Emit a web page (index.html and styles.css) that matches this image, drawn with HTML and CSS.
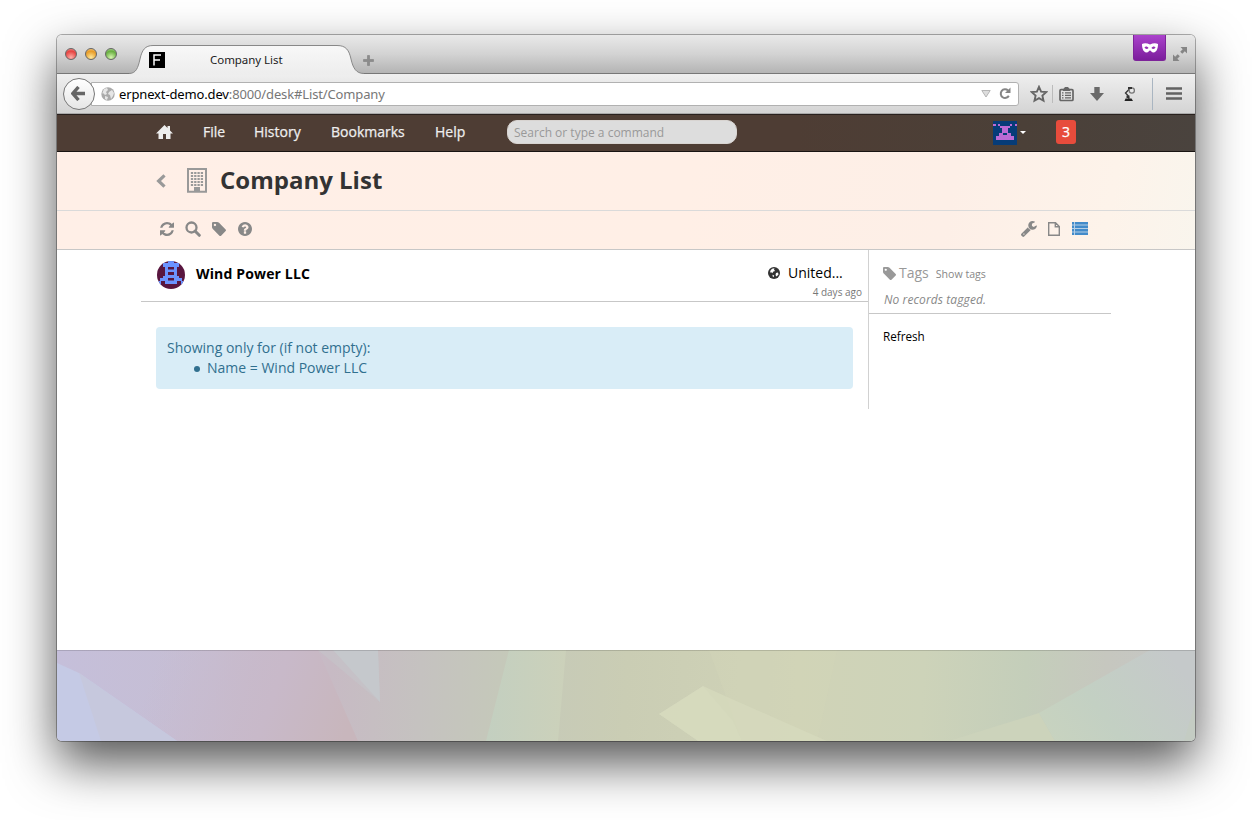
FILE: index.html
```html
<!DOCTYPE html>
<html lang="en">
<head>
<meta charset="utf-8">
<title>Company List</title>
<link rel="stylesheet" href="styles.css">
</head>
<body>
<div class="window">
  <div class="tabstrip">
    <div class="lights"><i class="red"></i><i class="amber"></i><i class="green"></i></div>
    <div class="tab">
      <svg class="tab-shape" width="240" height="30" viewBox="0 0 240 30"><defs><linearGradient id="tg" x2="0" y2="1"><stop stop-color="#f8f8f8"/><stop offset="1" stop-color="#ededed"/></linearGradient></defs><path d="M0 28.500C7 28.500 9 23 11 14C13 5 16 .5 24 .5H208C217 .5 220 5 222 14C224 23 227 28.500 235 28.500V30H0Z" fill="url(#tg)"/><path d="M0 28.500C7 28.500 9 23 11 14C13 5 16 .5 24 .5H208C217 .5 220 5 222 14C224 23 227 28.500 235 28.500" fill="none" stroke="#888"/></svg>
      <svg class="favicon" width="16" height="16"><path fill="#000" d="M0 0h16v16H0z"/><path d="M5 13.500V3h7M5 8h6" fill="none" stroke="#fff" stroke-width="1.500"/></svg>
      <span class="tab-title">Company List</span>
    </div>
    <svg class="plus" width="11" height="11"><path d="M4.500 .5h2v4h4v2h-4v4h-2v-4h-4v-2h4z" fill="#8c8c8c" stroke="#808080" stroke-width=".6"/></svg>
    <div class="mask"><svg width="16" height="10" viewBox="0 0 16 10"><path fill="#fff" fill-rule="evenodd" d="M0 1C2 0 5 0 8 1.500C11 0 14 0 16 1C16 5 15 9 11.500 9.500C9.500 9.500 9 7.500 8 7.500S6.500 9.500 4.500 9.500C1 9 0 5 0 1ZM2.500 4.500C3.500 6.300 5.500 6.300 6.500 5C5.500 3.300 3.500 3 2.500 4.500ZM13.500 4.500C12.500 3 10.500 3.300 9.500 5C10.500 6.300 12.500 6.300 13.500 4.500Z"/></svg></div>
    <svg class="expand" width="14" height="14" viewBox="0 0 14 14"><path fill="#858585" d="M7.500 0H14V6.500L11.800 4.300L9.300 6.800L7.200 4.700L9.700 2.200ZM0 7.500L2.200 9.700L4.700 7.200L6.800 9.300L4.300 11.800L6.500 14H0Z"/></svg>
  </div>
  <div class="addressbar">
    <div class="back"><svg width="15" height="15" viewBox="0 0 15 15"><path d="M7.500 1L1.800 7.500L7.500 14M3 7.500H14" fill="none" stroke="#666" stroke-width="3.400"/></svg></div>
    <div class="url">
      <svg width="14" height="14" viewBox="0 0 14 14"><circle cx="7" cy="7" r="6.700" fill="#aaa"/><path d="M3 2L6 1L7 3L5 5L6 7L4 8L2 6L1 7ZM8 5L11 3L13 6L12 9L10 12L9 8L7 7ZM4 9L7 10L6 13L4 12Z" fill="#e6e6e6"/></svg>
      <span class="address"><b>erpnext-demo.dev</b>:8000/desk#List/Company</span>
      <svg class="drop" width="10" height="8"><path d="M.8.5h8.400L5 7z" fill="#ddd" stroke="#b5b5b5"/></svg>
      <svg width="12" height="13" viewBox="0 0 12 13"><path d="M9.800 8.800A4.300 4.300 0 1 1 9 3.500" fill="none" stroke="#858585" stroke-width="2"/><path d="M11.500.5v5.500H6z" fill="#858585"/></svg>
    </div>
    <div class="tools">
      <svg width="18" height="18" viewBox="0 0 18 18"><path d="M9 1.800L11.100 6.600L16.200 7.100L12.400 10.600L13.500 15.700L9 13.100L4.500 15.700L5.600 10.600L1.800 7.100L6.900 6.600Z" fill="none" stroke="#666" stroke-width="1.900"/></svg>
      <i class="thin"></i>
      <svg class="clip" width="15" height="16" viewBox="0 0 15 16"><rect x="1" y="3.700" width="13" height="10.800" rx="1" fill="none" stroke="#666" stroke-width="1.700"/><path d="M4 3.500L6 1h3l2 2.500v1.500H4z" fill="#666"/><path d="M3 6.800h1.500M6 6.800h6M3 9.300h1.500M6 9.300h6M3 11.800h1.500M6 11.800h6" stroke="#666" stroke-width="1.200"/></svg>
      <svg class="down" width="14" height="14"><path d="M4.300 0h5.400v6H14L7 14L0 6h4.300z" fill="#6a6a6a"/></svg>
      <svg class="lamp" width="12" height="16" viewBox="0 0 12 16"><path d="M1.500 12.500h6l1.500 2.500H.5z" fill="#222"/><path d="M5 13L4 9.500L1.500 7L6 2.500" fill="none" stroke="#333" stroke-width="1.300"/><circle cx="7.800" cy="4.500" r="2.600" fill="#e8e8e8" stroke="#777" stroke-width="1.300"/><path d="M2.500 9.500h3V12h-3zM4 1h4v2H4z" fill="#333"/></svg>
      <i class="thick"></i>
      <svg class="burger" width="16" height="13"><path d="M0 .2h16v2.600H0zM0 5.200h16v2.600H0zM0 10.200h16v2.600H0z" fill="#626262"/></svg>
    </div>
  </div>
  <div class="navbar"><div class="container nav-inner">
    <svg class="home" width="17" height="14" viewBox="0 0 17 14"><path fill="#eee" d="M8.500 0L11.500 3V1h2.500v4.500L17 8.500H14.500V14H10V9H7V14H2.500V8.500H0Z"/></svg>
    <span class="n-file">File</span><span class="n-hist">History</span><span class="n-book">Bookmarks</span><span class="n-help">Help</span>
    <div class="search">Search or type a command</div>
    <svg class="avatar" width="24" height="24" viewBox="0 0 24 24" shape-rendering="crispEdges"><path fill="#063c78" d="M0 0h24v24H0z"/><path fill="#bb6bd5" d="M0 3h3v2H0zM5 3h2v2H5zM17 3h2v2h-2zM22 3h2v2h-2zM7 5h10v2h-2v5h-6V7H7zM6 12h4v2h4v-2h4v3h3v4H3v-4h3z"/></svg>
    <i class="caret"></i><span class="badge">3</span>
  </div></div>
  <div class="page-head">
    <div class="title-row"><div class="container title-inner">
      <svg class="chev" width="10" height="14" viewBox="0 0 10 14"><path d="M8.500 1.300L2.600 7L8.500 12.700" fill="none" stroke="#999" stroke-width="3.200"/></svg>
      <svg class="building" width="20" height="25" viewBox="0 0 20 25"><path d="M1 1h18v22.800H1z" fill="none" stroke="#999" stroke-width="2"/><path d="M5 4v14M8.300 4v14M11.600 4v14M14.900 4v14" stroke="#999" stroke-width="2.300" stroke-dasharray="2 1"/><path d="M7 19h6v5H7z" fill="#999"/></svg>
      <h1>Company List</h1>
    </div></div>
    <div class="tool-row"><div class="container tool-inner">
      <svg width="14" height="14" viewBox="0 0 1536 1536"><path d="M1511 928q0 5-1 7-64 268-268 434.500T764 1536q-146 0-282.500-55T238 1324l-129 129q-19 19-45 19t-45-19-19-45V960q0-26 19-45t45-19h448q26 0 45 19t19 45-19 45l-137 137q71 66 161 102t187 36q134 0 250-65t186-179q11-17 53-117 8-23 30-23h192q13 0 22.500 9.500t9.500 22.500zm25-800v448q0 26-19 45t-45 19h-448q-26 0-45-19t-19-45 19-45l138-138Q969 256 768 256q-134 0-250 65T332 500q-11 17-53 117-8 23-30 23H50q-13 0-22.500-9.500T18 608v-7q65-268 270-434.500T768 0q146 0 284 55.500T1297 212l130-129q19-19 45-19t45 19 19 45z"/></svg>
      <svg class="i-search" width="16" height="16" viewBox="0 0 16 16"><circle cx="6.500" cy="6.500" r="5" fill="none" stroke="#888" stroke-width="2.300"/><path d="M10 10l4.300 4.300" stroke="#888" stroke-width="3" stroke-linecap="round"/></svg>
      <svg class="i-tag" width="14" height="14" viewBox="128 128 1516 1516"><path d="M576 448q0-53-37.500-90.500T448 320t-90.500 37.500T320 448t37.500 90.500T448 576t90.500-37.500T576 448zm1067 576q0 53-37 90l-491 492q-39 37-91 37-53 0-90-37L219 890q-38-37-64.500-101T128 672V256q0-52 38-90t90-38h416q53 0 117 26.500T891 219l715 714q37 39 37 91z"/></svg>
      <svg class="i-help" width="14" height="14" viewBox="128 128 1536 1536"><path d="M1024 1376v-192q0-14-9-23t-23-9H800q-14 0-23 9t-9 23v192q0 14 9 23t23 9h192q14 0 23-9t9-23zm256-672q0-88-55.500-163t-138.500-116-170-41q-243 0-371 213-15 24 8 42l132 100q7 6 19 6 16 0 25-12 53-68 86-92 34-24 86-24 48 0 85.500 26t37.500 59q0 38-20 61t-68 45q-63 28-115.500 86.500T768 1020v36q0 14 9 23t23 9h192q14 0 23-9t9-23q0-19 21.500-49.500t54.500-49.500q32-18 49-28.500t46-35 44.500-48 28-60.500 12.500-81zm384 192q0 209-103 385.500T1281.500 1561 896 1664t-385.500-103T231 1281.500 128 896t103-385.500T510.500 231 896 128t385.500 103T1561 510.500 1664 896z"/></svg>
      <svg class="i-wrench" width="16" height="16" viewBox="85 128 1650 1650"><path d="M448 1472q0-26-19-45t-45-19-45 19-19 45 19 45 45 19 45-19 19-45zm644-420l-682 682q-37 37-90 37-52 0-91-37L123 1626q-38-36-38-90 0-53 38-91l681-681q39 98 114.500 173.500T1092 1052zm634-435q0 39-23 106-47 134-164.500 217.500T1280 1024q-185 0-316.500-131.500T832 576t131.500-316.500T1280 128q58 0 121.500 16.500T1509 191q16 11 16 28t-16 28l-293 169v224l193 107q5-3 79-48.500t135.500-81T1694 582q15 0 23.500 10t8.500 25z"/></svg>
      <svg class="i-file" width="12" height="14" viewBox="0 0 12 14"><path d="M.7.700h6.800L11.300 4.500V13.300H.7zM7.300.7V4.700h4" fill="none" stroke="#888" stroke-width="1.400"/></svg>
      <svg class="i-list" width="16" height="13" viewBox="0 0 16 13"><path fill="#b5cfe6" d="M0 0h16v13H0z"/><path fill="#428bca" d="M0 0h2v2.500H0zM3 0h13v2.500H3zM0 3.500h2V6H0zM3 3.500h13V6H3zM0 7h2v2.500H0zM3 7h13v2.500H3zM0 10.500h2V13H0zM3 10.500h13V13H3z"/></svg>
    </div></div>
  </div>
  <div class="content"><div class="container columns">
    <div class="main">
      <div class="record">
        <svg class="logo" width="30" height="30" viewBox="0 0 30 30"><defs><clipPath id="c"><circle cx="15" cy="15" r="14"/></clipPath></defs><g clip-path="url(#c)"><path fill="#59163f" d="M0 0h30v30H0z"/><path fill="#6b93ff" d="M7 3h5V1h6v2h5v4h-2v9h2v2h3v3h2v6h-3v-6h-4v3H9v-3H5v6H2v-6h2v-3h3v-2h2V7H7z"/><path fill="#59163f" d="M12 7h6v2.500h-6zM12 12h6v3h-6zM12 18h6v2.500h-6z"/></g></svg>
        <b>Wind Power LLC</b>
        <div class="meta"><div class="country"><svg width="12" height="12" viewBox="0 0 12 12"><circle cx="6" cy="6" r="6" fill="#333"/><path fill="#fff" d="M4 1.800L6.500 1.200L6 2.500L7 4L5 4.700L4.500 6.200L3.200 5.300L2 5.500L2.500 3.500ZM8 6L10 5.500L10.500 7.500L8.500 9.500L7.500 8ZM4.500 7.800L6.200 8.500L5.500 10.300L4.700 9.500Z"/></svg><span>United...</span></div><small>4 days ago</small></div>
      </div>
      <div class="alert">Showing only for (if not empty):<ul><li>Name = Wind Power LLC</li></ul></div>
    </div>
    <div class="side">
      <div class="tags"><div class="tags-head"><svg width="13" height="13" viewBox="128 128 1516 1516"><path d="M576 448q0-53-37.500-90.500T448 320t-90.500 37.500T320 448t37.500 90.500T448 576t90.500-37.500T576 448zm1067 576q0 53-37 90l-491 492q-39 37-91 37-53 0-90-37L219 890q-38-37-64.500-101T128 672V256q0-52 38-90t90-38h416q53 0 117 26.500T891 219l715 714q37 39 37 91z"/></svg><span>Tags</span><small>Show tags</small></div><em>No records tagged.</em></div>
      <div class="refresh">Refresh</div>
    </div>
  </div></div>
  <svg class="wallpaper" width="1138" height="91" viewBox="0 0 1138 91"><defs><linearGradient id="wall" gradientUnits="userSpaceOnUse" x1="0" y1="0" x2="1138" y2="60"><stop stop-color="#c5bfda"/><stop offset=".14" stop-color="#c6bed3"/><stop offset=".24" stop-color="#c7bac4"/><stop offset=".32" stop-color="#c5c2c0"/><stop offset=".4" stop-color="#c5c9b9"/><stop offset=".5" stop-color="#cacdb4"/><stop offset=".65" stop-color="#d0d3b7"/><stop offset=".76" stop-color="#cdd3b9"/><stop offset=".85" stop-color="#c4ceba"/><stop offset=".92" stop-color="#c6c7bf"/><stop offset="1" stop-color="#c5c6c7"/></linearGradient><linearGradient id="rose" gradientUnits="userSpaceOnUse" x1="100" y1="10" x2="290" y2="80"><stop stop-color="#c8b9cc" stop-opacity="0"/><stop offset=".6" stop-color="#c8b9c9"/><stop offset="1" stop-color="#c8b6bc"/></linearGradient><linearGradient id="mint"><stop stop-color="#c3cfc0"/><stop offset="1" stop-color="#ccd1ba"/></linearGradient><linearGradient id="se" gradientUnits="userSpaceOnUse" x1="990" y1="90" x2="1110" y2="0"><stop stop-color="#c8d3bf"/><stop offset=".4" stop-color="#c3d0c3"/><stop offset="1" stop-color="#c5c9ca"/></linearGradient></defs>
    <path fill="url(#wall)" d="M0 0h1138v91H0z"/><path fill="url(#rose)" d="M0 91V0H261L301 91Z"/><path fill="#c5cae5" d="M0 13L22 23L120 91H0Z"/><path fill="#c6c8dd" d="M22 23L120 91H44Z"/><path fill="#c5c4c9" d="M261 0H321L323 52Z" opacity=".6"/><path fill="#c5c8cc" d="M276 0H321L323 52Z"/><path fill="url(#mint)" d="M452 0H509L501 91H429Z"/><path fill="#d3d6bb" d="M652 0H780L760 91H685Z" opacity=".3"/><path fill="#d6dabd" d="M602 64L646 36L668 46L770 91H641Z" opacity=".8"/><path fill="#d8dcbf" d="M602 64L646 36L676 71L685 91H641Z" opacity=".5"/><path fill="#ccd3bb" d="M892 91L982 63L998 91Z"/><path fill="url(#se)" d="M982 63L1093 0H1138V91H998Z"/><path fill="#c4ccc3" d="M1138 53V91H1127Z"/><path d="M0 .5H1138" stroke="#000" stroke-opacity=".14"/></svg>
</div>
</body>
</html>
```
FILE: styles.css
```css
* { box-sizing: border-box; }
body { margin: 0; height: 820px; padding: 35px 57px 0; overflow: hidden; background: #fff; font: 14px/20px "Open Sans", sans-serif; color: #000; }
svg { display: block; flex: none; fill: #888; }
i { flex: none; }
.window { width: 1138px; height: 706px; overflow: hidden; border-radius: 5px; background: #fff; box-shadow: 0 0 0 1px rgba(0,0,0,.3), 0 22px 50px rgba(0,0,0,.68); }
.container { width: 970px; margin: 0 auto; }
.tabstrip { height: 39px; display: flex; align-items: flex-start; background: linear-gradient(#e9e9e9, #d3d3d3 50%, #b4b4b4); border-bottom: 1px solid #777; }
.lights { display: flex; gap: 8px; padding: 13px 0 0 8px; width: 72px; flex: none; }
.lights i { width: 12px; height: 12px; border-radius: 50%; border: 1px solid #666; }
.red { background: radial-gradient(circle at 50% 85%, #ffb0aa, #e5423f 65%, #f5aaa7); }
.amber { background: radial-gradient(circle at 50% 85%, #ffe99c, #e79a25 65%, #fbd9a0); }
.green { background: radial-gradient(circle at 50% 85%, #d8f7b1, #66ad3e 65%, #c5e8b0); }
.tab { position: relative; width: 232px; height: 30px; margin-top: 10px; display: flex; align-items: center; flex: none; }
.tab-shape { position: absolute; left: 0; top: 0; }
.favicon { position: relative; margin-left: 20px; }
.tab-title { position: relative; margin-left: 45px; font-family: "Noto Sans", sans-serif; font-size: 11.500px; letter-spacing: -.05px; color: #222; white-space: nowrap; }
.plus { margin: 20px 0 0 2px; }
.mask { margin-left: auto; width: 33px; height: 26px; display: flex; align-items: center; justify-content: center; background: linear-gradient(#ab43cc, #7b1d9c); border: 1px solid #7d2499; border-top: 0; border-radius: 0 0 3px 3px; }
.expand { margin: 12px 8px 0 7px; }
.addressbar { height: 40px; display: flex; align-items: center; background: linear-gradient(#efefef, #d4d4d4); border-bottom: 1px solid #aaa; }
.back { z-index: 1; position: relative; width: 32px; height: 32px; margin-left: 6px; border: 1px solid #777; border-radius: 50%; background: linear-gradient(#fff, #e6e6e6); display: flex; align-items: center; flex: none; padding-left: 7px; }
.url { width: 928px; height: 24px; margin-left: -4px; padding: 0 7px 0 9px; background: #fff; border: 1px solid #b1b1b1; border-radius: 0 3px 3px 0; display: flex; align-items: center; flex: none; }
.address { margin-left: 4px; flex: 1; font-family: "Noto Sans", sans-serif; font-size: 13px; letter-spacing: -.14px; color: #777; white-space: nowrap; }
.address b { font-weight: 400; color: #000; }
.drop { margin-right: 8px; }
.tools { display: flex; align-items: center; flex: 1; padding-left: 11px; }
.thin { width: 1px; height: 18px; background: #bbb; margin-left: 4px; }
.thick { width: 1px; height: 32px; background: #a9b5c1; margin-left: 16px; }
.clip { margin-left: 6px; } .down { margin-left: 16px; } .lamp { margin-left: 20px; } .burger { margin-left: 13px; }
.navbar { height: 38px; background: linear-gradient(90deg, #4e3d34 0 65%, #4b4038 85%, #4a433e); border-top: 1px solid #29211e; border-bottom: 1px solid #191412; color: #eee; }
.nav-inner { height: 34px; padding-left: 15px; display: flex; align-items: center; }
.nav-inner > span { flex: none; -webkit-text-stroke: .25px; }
.n-file { width: 51px; margin-left: 30px; } .n-hist { width: 77px; } .n-book { width: 104px; } .n-help { width: 71px; }
.search { width: 230px; height: 24px; border: 1px solid #d8d4d1; border-radius: 10px; background: #ddd; padding-left: 6px; color: #999; font-size: 12px; line-height: 23px; flex: none; }
.nav-inner > .search { margin-left: 1px; }
.avatar { margin-left: 256px; margin-top: 2px; }
.caret { margin-left: 3px; border: 3.500px solid transparent; border-top-color: #fff; border-bottom: 0; }
.badge { width: 20px; height: 24px; margin-left: 30px; border-radius: 3px; background: #e74c3c; color: #fff; text-align: center; line-height: 23px; }
.page-head { background: linear-gradient(100deg, #ffefe7, #ffefe6 55%, #fdefe7 78%, #fdf3ea 92%, #f9f5ed); height: 98px; border-bottom: 1px solid #c7c7c7; }
.title-row { height: 59px; border-bottom: 1px solid #dadada; }
.title-inner { height: 57px; display: flex; align-items: center; padding-left: 15px; }
.building { margin-left: 21px; }
h1 { margin: -2px 0 0 13px; font-size: 24px; line-height: 32px; font-weight: 700; color: #333; }
.tool-inner { height: 36px; display: flex; align-items: center; padding-left: 19px; }
.i-search { margin-left: 11px; } .i-tag { margin-left: 11px; } .i-help { margin-left: 12px; } .i-wrench { margin-left: 769px; } .i-file { margin-left: 11px; } .i-list { margin-left: 12px; margin-top: -1px; }
.content { height: 400px; }
.columns { display: grid; grid-template-columns: 727px 243px; align-items: start; }
.record { height: 52px; display: flex; padding: 0 6px 0 15px; border-bottom: 1px solid #c7c7c7; }
.logo { margin-top: 10px; }
.record b { margin: 14px 0 0 10px; font-weight: 700; letter-spacing: .15px; }
.meta { margin-left: auto; width: 94px; padding-top: 13px; }
.country { display: flex; align-items: center; }
.country span { margin-left: 8px; }
.meta small { display: block; text-align: right; font-size: 10px; line-height: 18px; color: #777; white-space: nowrap; }
.alert { margin: 25px 15px 0; height: 62px; padding: 11px; border-radius: 4px; background: #d9edf7; color: #31708f; }
ul { margin: 0; padding-left: 26px; list-style: none; }
li { display: flex; align-items: center; }
li::before { content: ""; width: 6px; height: 6px; margin: 1px 7px 0 1px; border-radius: 50%; background: #31708f; }
.side { border-left: 1px solid #d1d1d1; height: 159px; }
.tags { height: 64px; padding: 12px 0 0 14px; border-bottom: 1px solid #c7c7c7; color: #999; }
.tags-head { display: flex; align-items: center; }
.tags svg { fill: #999; }
.tags span { margin-left: 3px; }
.tags small { font-size: 10.600px; margin: 2px 0 0 7px; color: #888; }
.tags em { display: block; margin: 6px 0 0 1px; font-size: 12px; letter-spacing: .1px; color: #888; }
.refresh { padding: 12px 14px; font-size: 11.700px; }
.wallpaper { width: 1138px; height: 91px; }
```
